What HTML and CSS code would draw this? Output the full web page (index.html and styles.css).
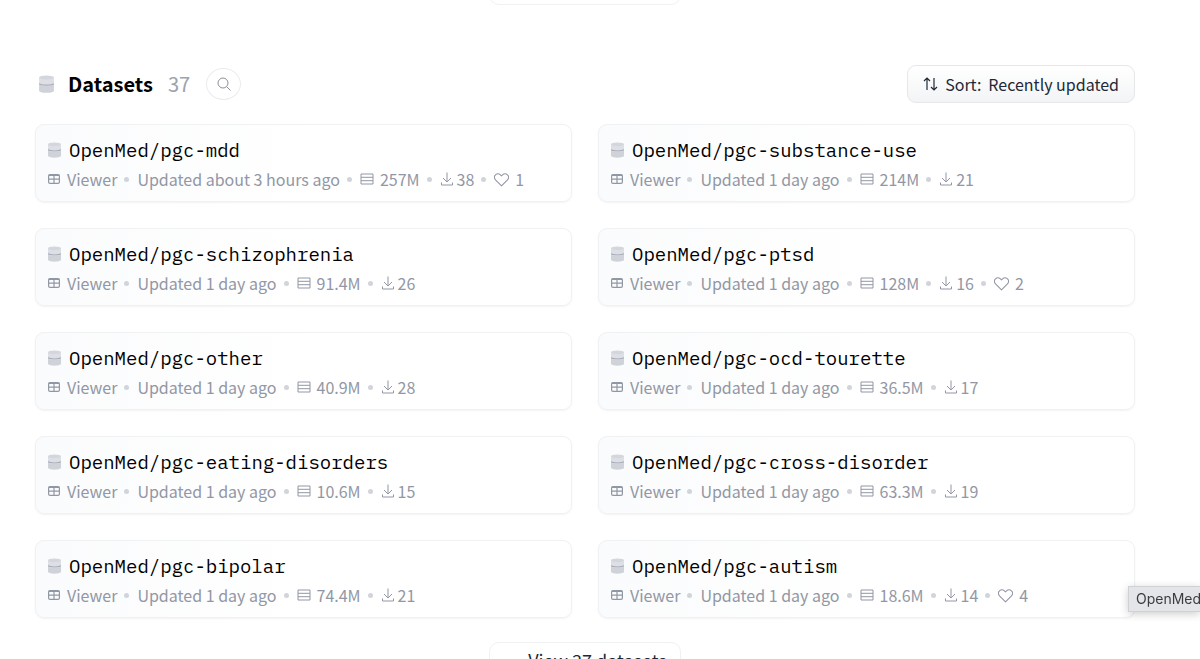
FILE: index.html
```html
<!DOCTYPE html>
<html lang="en">
<head>
    <meta charset="UTF-8">
    <meta name="viewport" content="width=device-width, initial-scale=1.0">
    <title>Datasets</title>
    <link rel="stylesheet" href="styles.css">
</head>
<body>

<!-- Shared icons -->
<svg class="sprite" aria-hidden="true">
    <symbol id="icon-db" viewBox="0 0 14 17">
        <path fill="#dddfe5" d="M0 2.300v6c0 1 3 1.800 7 1.800s7-.8 7-1.800v-6z"/>
        <path fill="#cfd2d9" d="M0 8.500v6.300c0 1.200 2.800 2 7 2s7-.8 7-2V8.500c0 1-3 1.800-7 1.800S0 9.500 0 8.500z"/>
        <ellipse cx="7" cy="2.300" rx="7" ry="1.900" fill="#d3d6dd"/>
        <path fill="none" stroke="#a9aebb" stroke-width="1.200" d="M0 8.300c1.300.9 4 1.300 7 1.300s5.700-.4 7-1.300"/>
    </symbol>
    <symbol id="icon-viewer" viewBox="0 0 12 12">
        <rect x=".6" y="1.600" width="10.800" height="8.800" rx="1.400" fill="none" stroke="currentColor" stroke-width="1.200"/>
        <path fill="none" stroke="currentColor" stroke-width="1.200" d="M.6 2.400H11.400M.6 6.200H11.400M6 2v8.400"/>
    </symbol>
    <symbol id="icon-rows" viewBox="0 0 14 14">
        <path fill="none" stroke="currentColor" d="M1 2h12v10H1zM1 5.300h12M1 8.700h12"/>
    </symbol>
    <symbol id="icon-download" viewBox="0 0 14 14">
        <path fill="none" stroke="currentColor" d="M7 .5v9.500M3 6l4 4 4-4M1.500 10.500v2.500h11v-2.500"/>
    </symbol>
    <symbol id="icon-heart" viewBox="0 0 14 14">
        <path fill="none" stroke="currentColor" stroke-linejoin="round" d="M7 12.900L1.400 7.300a3.300 3.300 0 0 1 0-4.600 3.300 3.300 0 0 1 4.600 0L7 3.700l1-1a3.300 3.300 0 0 1 4.600 0 3.300 3.300 0 0 1 0 4.600z"/>
    </symbol>
</svg>

<div class="previous-section"><div class="previous-button"></div></div>

<main class="datasets">
    <header class="datasets-header">
        <svg class="header-icon"><use href="#icon-db"/></svg>
        <h2>Datasets</h2>
        <span class="count">37</span>
        <button class="search-button" aria-label="Search datasets">
            <svg viewBox="0 0 14 14"><circle cx="6" cy="6" r="5" fill="none" stroke="currentColor"/><path stroke="currentColor" d="M9.600 9.600L13.500 13.500"/></svg>
        </button>
        <button class="sort-button">
            <svg viewBox="0 0 15 14"><path fill="none" stroke="currentColor" stroke-width="1.200" d="M4 13V1M1 4l3-3 3 3M11 1v12M8 10l3 3 3-3"/></svg>
            <span>Sort:</span>
            <span>Recently updated</span>
        </button>
    </header>

    <div class="dataset-grid">
        <a class="card" href="#">
            <h4><svg><use href="#icon-db"/></svg>OpenMed/pgc-mdd</h4>
            <div class="meta">
                <span class="viewer"><svg><use href="#icon-viewer"/></svg>Viewer</span>
                <span>Updated about 3 hours ago</span>
                <span class="rows"><svg><use href="#icon-rows"/></svg>257M</span>
                <span class="downloads"><svg><use href="#icon-download"/></svg>38</span>
                <span class="likes"><svg><use href="#icon-heart"/></svg>1</span>
            </div>
        </a>
        <a class="card" href="#">
            <h4><svg><use href="#icon-db"/></svg>OpenMed/pgc-substance-use</h4>
            <div class="meta">
                <span class="viewer"><svg><use href="#icon-viewer"/></svg>Viewer</span>
                <span>Updated 1 day ago</span>
                <span class="rows"><svg><use href="#icon-rows"/></svg>214M</span>
                <span class="downloads"><svg><use href="#icon-download"/></svg>21</span>
            </div>
        </a>
        <a class="card" href="#">
            <h4><svg><use href="#icon-db"/></svg>OpenMed/pgc-schizophrenia</h4>
            <div class="meta">
                <span class="viewer"><svg><use href="#icon-viewer"/></svg>Viewer</span>
                <span>Updated 1 day ago</span>
                <span class="rows"><svg><use href="#icon-rows"/></svg>91.4M</span>
                <span class="downloads"><svg><use href="#icon-download"/></svg>26</span>
            </div>
        </a>
        <a class="card" href="#">
            <h4><svg><use href="#icon-db"/></svg>OpenMed/pgc-ptsd</h4>
            <div class="meta">
                <span class="viewer"><svg><use href="#icon-viewer"/></svg>Viewer</span>
                <span>Updated 1 day ago</span>
                <span class="rows"><svg><use href="#icon-rows"/></svg>128M</span>
                <span class="downloads"><svg><use href="#icon-download"/></svg>16</span>
                <span class="likes"><svg><use href="#icon-heart"/></svg>2</span>
            </div>
        </a>
        <a class="card" href="#">
            <h4><svg><use href="#icon-db"/></svg>OpenMed/pgc-other</h4>
            <div class="meta">
                <span class="viewer"><svg><use href="#icon-viewer"/></svg>Viewer</span>
                <span>Updated 1 day ago</span>
                <span class="rows"><svg><use href="#icon-rows"/></svg>40.9M</span>
                <span class="downloads"><svg><use href="#icon-download"/></svg>28</span>
            </div>
        </a>
        <a class="card" href="#">
            <h4><svg><use href="#icon-db"/></svg>OpenMed/pgc-ocd-tourette</h4>
            <div class="meta">
                <span class="viewer"><svg><use href="#icon-viewer"/></svg>Viewer</span>
                <span>Updated 1 day ago</span>
                <span class="rows"><svg><use href="#icon-rows"/></svg>36.5M</span>
                <span class="downloads"><svg><use href="#icon-download"/></svg>17</span>
            </div>
        </a>
        <a class="card" href="#">
            <h4><svg><use href="#icon-db"/></svg>OpenMed/pgc-eating-disorders</h4>
            <div class="meta">
                <span class="viewer"><svg><use href="#icon-viewer"/></svg>Viewer</span>
                <span>Updated 1 day ago</span>
                <span class="rows"><svg><use href="#icon-rows"/></svg>10.6M</span>
                <span class="downloads"><svg><use href="#icon-download"/></svg>15</span>
            </div>
        </a>
        <a class="card" href="#">
            <h4><svg><use href="#icon-db"/></svg>OpenMed/pgc-cross-disorder</h4>
            <div class="meta">
                <span class="viewer"><svg><use href="#icon-viewer"/></svg>Viewer</span>
                <span>Updated 1 day ago</span>
                <span class="rows"><svg><use href="#icon-rows"/></svg>63.3M</span>
                <span class="downloads"><svg><use href="#icon-download"/></svg>19</span>
            </div>
        </a>
        <a class="card" href="#">
            <h4><svg><use href="#icon-db"/></svg>OpenMed/pgc-bipolar</h4>
            <div class="meta">
                <span class="viewer"><svg><use href="#icon-viewer"/></svg>Viewer</span>
                <span>Updated 1 day ago</span>
                <span class="rows"><svg><use href="#icon-rows"/></svg>74.4M</span>
                <span class="downloads"><svg><use href="#icon-download"/></svg>21</span>
            </div>
        </a>
        <a class="card" href="#">
            <h4><svg><use href="#icon-db"/></svg>OpenMed/pgc-autism</h4>
            <div class="meta">
                <span class="viewer"><svg><use href="#icon-viewer"/></svg>Viewer</span>
                <span>Updated 1 day ago</span>
                <span class="rows"><svg><use href="#icon-rows"/></svg>18.6M</span>
                <span class="downloads"><svg><use href="#icon-download"/></svg>14</span>
                <span class="likes"><svg><use href="#icon-heart"/></svg>4</span>
            </div>
        </a>
    </div>

    <button class="view-all">View 37 datasets</button>
</main>

<div class="tooltip">OpenMed</div>

</body>
</html>
```
FILE: styles.css
```css
body {
    font-family: "Noto Sans CJK SC", "Noto Sans", sans-serif;
    font-size: 16px;
    margin: 0;
    height: 100vh;
    overflow: hidden;
    background-color: #fff;
    color: #1f2937;
}

button {
    font: inherit;
    color: inherit;
    padding: 0;
    cursor: pointer;
}

svg {
    flex: none;
}

.sprite {
    position: absolute;
    width: 0;
    height: 0;
}

/* Bottom edge of the section above */
.previous-section {
    height: 5px;
    padding: 0 65px 0 35px;
    overflow: hidden;
    display: flex;
    justify-content: center;
    align-items: flex-end;
}

.previous-button {
    width: 190px;
    height: 36px;
    border: 1px solid #f0f1f3;
    border-radius: 10px;
}

.datasets {
    display: flex;
    flex-direction: column;
    padding: 60px 65px 0 35px;
}

.datasets-header {
    display: flex;
    align-items: center;
    margin-bottom: 21px;
}

.header-icon {
    width: 15px;
    height: 18px;
    margin: 0 14px 0 4px;
}

.datasets-header h2 {
    font-size: 20px;
    font-weight: bold;
    line-height: 28px;
    color: #000;
    margin: 0 15px 0 0;
}

.count {
    font-size: 20px;
    line-height: 28px;
    color: #9ca3af;
    margin-right: 16px;
}

.search-button {
    display: flex;
    align-items: center;
    justify-content: center;
    width: 35px;
    height: 32px;
    border: 1px solid #e9ebee;
    border-radius: 50%;
    background-color: #fff;
    color: #8b909c;
}

.search-button svg {
    width: 14px;
    height: 14px;
}

.sort-button {
    display: flex;
    align-items: center;
    gap: 7px;
    margin-left: auto;
    height: 38px;
    padding: 0 15px;
    border: 1px solid #e5e7eb;
    border-radius: 9px;
    background: linear-gradient(to bottom, #fff, #f3f4f6);
}

.sort-button svg {
    width: 15px;
    height: 14px;
}

/* Dataset cards */
.dataset-grid {
    display: grid;
    grid-template-columns: 1fr 1fr;
    gap: 26px;
}

.card {
    border: 1px solid #f0f1f3;
    border-radius: 9px;
    padding: 11px 12px 12px;
    background: linear-gradient(to right, #fafbfc, #fff 50%);
    box-shadow: 0 1px 2px rgba(0, 0, 0, 0.05);
    color: #9297a5;
    text-decoration: none;
}

.card h4 {
    display: flex;
    align-items: center;
    gap: 8px;
    margin: 0 0 5px;
    font-family: "IBM Plex Mono", "Liberation Mono", monospace;
    font-size: 19px;
    font-weight: normal;
    line-height: 28px;
    color: #000;
}

.card h4 svg {
    width: 13px;
    height: 16px;
}

.meta {
    display: flex;
    align-items: center;
    line-height: 20px;
    white-space: nowrap;
}

.meta span {
    display: flex;
    align-items: center;
}

.meta > span + span::before {
    content: "";
    width: 5px;
    height: 5px;
    margin: 0 8px 0 7px;
    border-radius: 50%;
    background-color: #d1d5db;
}

.viewer svg {
    width: 12px;
    height: 12px;
    margin-right: 7px;
}

.rows svg {
    width: 14px;
    height: 14px;
    margin-right: 6px;
}

.downloads svg {
    width: 14px;
    height: 14px;
    margin-right: 3px;
}

.likes svg {
    width: 15px;
    height: 15px;
    margin-right: 6px;
}

.view-all {
    align-self: center;
    margin-top: 24px;
    padding: 0 13px 0 38px;
    border: 1px solid #f0f1f3;
    border-radius: 10px;
    background-color: #fff;
    font-size: 18px;
    line-height: 34px;
}

.tooltip {
    position: fixed;
    top: 586px;
    right: 0;
    box-sizing: border-box;
    width: 72px;
    padding-left: 7px;
    overflow: hidden;
    border: 1px solid #d0d1d4;
    border-right: none;
    background-color: #e4e5e8;
    box-shadow: 0 2px 8px rgba(0, 0, 0, 0.2);
    color: #3c3d40;
    font-family: Inter, sans-serif;
    font-size: 14px;
    line-height: 24px;
}
```
